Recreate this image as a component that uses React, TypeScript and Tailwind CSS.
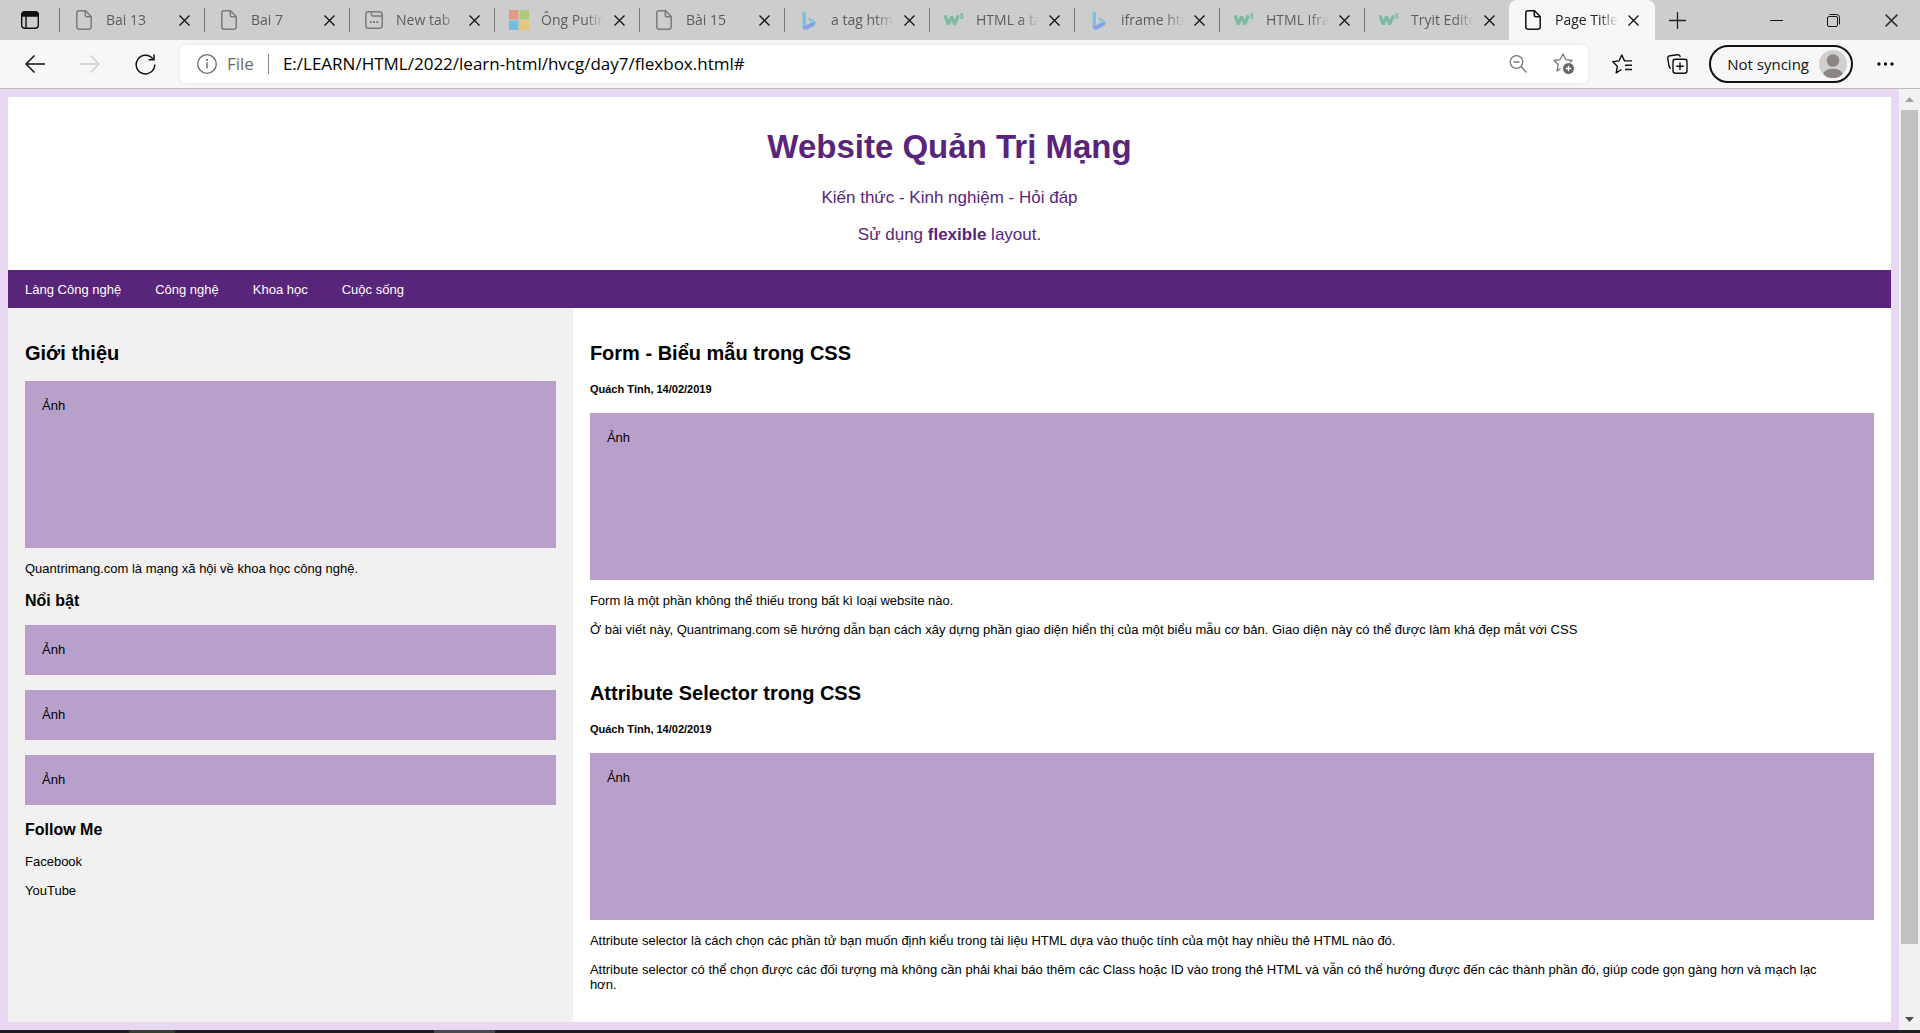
import type { ReactNode } from "react";

type IconKind = "file" | "newtab" | "ms" | "bing" | "w3";

function FileIcon({ dark = false }: { dark?: boolean }) {
  return (
    <svg width="16" height="20" viewBox="0 0 16 20" fill="none" stroke={dark ? "#111" : "#7b7b7b"} strokeWidth="1.5">
      <path d="M3 .8h6.500L15.200 6.500V17a2.200 2.200 0 0 1-2.200 2.200H3A2.200 2.200 0 0 1 .8 17V3A2.200 2.200 0 0 1 3 .8z" />
      <path d="M9.300 1v4.200a1.500 1.500 0 0 0 1.500 1.500H15" />
    </svg>
  );
}

function Favicon({ kind, active }: { kind: IconKind; active: boolean }) {
  if (kind === "file") return <FileIcon dark={active} />;
  if (kind === "newtab")
    return (
      <svg width="18" height="18" viewBox="0 0 18 18" fill="none" stroke="#7b7b7b" strokeWidth="1.500">
        <rect x=".8" y=".8" width="16.400" height="16.400" rx="3" />
        <path d="M6.500 1v2.500a1.500 1.500 0 0 0 1.500 1.500h9" />
        <path d="M5 11h1.800M8.200 11H10M11.400 11h1.800" strokeWidth="1.800" />
      </svg>
    );
  if (kind === "ms")
    return (
      <svg width="20" height="20" viewBox="0 0 20 20">
        <path fill="#e09a88" d="M0 0h9.500v9.500H0z" />
        <path fill="#b2c97c" d="M10.500 0H20v9.500h-9.500z" />
        <path fill="#76bddd" d="M0 10.500h9.500V20H0z" />
        <path fill="#e4c778" d="M10.500 10.500H20V20h-9.500z" />
      </svg>
    );
  if (kind === "bing")
    return (
      <svg width="14" height="19" viewBox="0 0 14 19">
        <path fill="#83bfe3" d="M.5 0 4 1.300v13L.5 16.500z" />
        <path fill="#86a4e3" d="M.5 15.500 4 14.300l4.500-2.600 4.800-1.100c.4 2-.3 3.600-2 4.700L5.300 18.500C3 19.300.5 18 .5 15.500z" />
        <path fill="#7cc5e2" d="M5.600 6.200 11 8.500c1.600.8 2.500 2.500 2.300 4.300-.6-1-1.300-1.400-2.200-1.700L7.300 10z" />
      </svg>
    );
  return (
    <svg width="21" height="14" viewBox="0 0 21 14" fill="none" stroke="#7bbba2">
      <path d="M1 2l3.500 9.500L8 3.500l3.300 8L15 2" strokeWidth="3.400" strokeLinejoin="bevel" />
      <path d="M16.800.8h2.700l-1.400 1.800c2.300.1 1.900 2.900-.1 2.600-.6 0-1-.3-1.300-.6" strokeWidth="1.300" />
    </svg>
  );
}

function Cross({ size = 11, color = "#111" }: { size?: number; color?: string }) {
  return (
    <svg width={size} height={size} viewBox="0 0 11 11" stroke={color} strokeWidth="1.300">
      <path d="M.5.500l10 10M10.500.500l-10 10" />
    </svg>
  );
}

const tabs: { icon: IconKind; title: string }[] = [
  { icon: "file", title: "Bai 13" },
  { icon: "file", title: "Bai 7" },
  { icon: "newtab", title: "New tab" },
  { icon: "ms", title: "Ông Putin" },
  { icon: "file", title: "Bài 15" },
  { icon: "bing", title: "a tag html" },
  { icon: "w3", title: "HTML a tag" },
  { icon: "bing", title: "iframe html" },
  { icon: "w3", title: "HTML Iframe" },
  { icon: "w3", title: "Tryit Editor" },
  { icon: "file", title: "Page Title" },
];

function Tab({ icon, title, active }: { icon: IconKind; title: string; active: boolean }) {
  return (
    <div
      className={
        active
          ? "flex h-10 w-[146px] min-w-0 items-center rounded-t-lg bg-[#f7f7f7] pl-3.5 pr-4"
          : "flex h-10 w-[145px] min-w-0 items-center pr-3.5"
      }
    >
      {!active && <span className="mr-3.5 h-6 w-px shrink-0 bg-[#777]" />}
      <span className="flex w-5 shrink-0 items-center justify-center">
        <Favicon kind={icon} active={active} />
      </span>
      <span
        className={
          active
            ? "ml-3 w-[63px] overflow-hidden whitespace-nowrap text-[#222] [mask-image:linear-gradient(to_right,black_70%,transparent)]"
            : "ml-3 w-[63px] overflow-hidden whitespace-nowrap text-[#5c5c5c] [mask-image:linear-gradient(to_right,black_70%,transparent)]"
        }
      >
        {title}
      </span>
      <button aria-label={"Close " + title} className="ml-auto">
        <Cross />
      </button>
    </div>
  );
}

function ToolButton({ label, children }: { label: string; children: ReactNode }) {
  return (
    <button aria-label={label} className="flex size-9 shrink-0 items-center justify-center">
      {children}
    </button>
  );
}

function TabStrip() {
  return (
    <div className="flex h-10 items-center bg-[#cdcdcd] text-sm">
      <button aria-label="Tab actions" className="flex w-[59px] shrink-0 items-center justify-center">
        <svg width="18" height="18" viewBox="0 0 18 18" fill="none" stroke="#111" strokeWidth="1.400">
          <rect x=".7" y=".7" width="16.600" height="16.600" rx="3" />
          <path d="M1 3.500A2.500 2.500 0 0 1 3.500 1h11A2.500 2.500 0 0 1 17 3.500V5H1z" fill="#111" />
          <path d="M5 5v12" />
        </svg>
      </button>
      {tabs.map((t, i) => (
        <Tab key={i} icon={t.icon} title={t.title} active={i === tabs.length - 1} />
      ))}
      <button aria-label="New tab" className="ml-3.5">
        <svg width="17" height="17" viewBox="0 0 17 17" stroke="#222" strokeWidth="1.300">
          <path d="M8.500 0v17M0 8.500h17" />
        </svg>
      </button>
      <div className="ml-auto flex">
        <button aria-label="Minimize" className="flex h-10 w-[57px] items-center justify-center">
          <svg width="13" height="13" viewBox="0 0 13 13" stroke="#111"><path d="M0 6.500h13" /></svg>
        </button>
        <button aria-label="Restore" className="flex h-10 w-[57px] items-center justify-center">
          <svg width="13" height="13" viewBox="0 0 13 13" fill="none" stroke="#111">
            <rect x=".5" y="2.500" width="10" height="10" rx="1.500" />
            <path d="M2.500.5h7a3 3 0 0 1 3 3v7" />
          </svg>
        </button>
        <button aria-label="Close window" className="flex h-10 w-[58px] items-center justify-center">
          <Cross size={13} color="#333" />
        </button>
      </div>
    </div>
  );
}

function Toolbar() {
  return (
    <div className="flex h-[49px] items-center border-b border-[#bdbdbd] bg-[#f7f7f7] pl-[17px] pr-[17px]">
      <div className="mr-[17px] flex gap-[19px]">
        <ToolButton label="Back">
          <svg width="20" height="18" viewBox="0 0 20 18" fill="none" stroke="#111" strokeWidth="1.500"><path d="M20 9H1M9.500.500L1 9l8.500 8.500" /></svg>
        </ToolButton>
        <ToolButton label="Forward">
          <svg width="20" height="18" viewBox="0 0 20 18" fill="none" stroke="#cfcfcf" strokeWidth="1.500"><path d="M0 9h19M10.500.500L19 9l-8.500 8.500" /></svg>
        </ToolButton>
        <ToolButton label="Refresh">
          <svg width="21" height="21" viewBox="0 0 21 21" fill="none" stroke="#111" strokeWidth="1.500">
            <path d="M19.800 10.500A9.300 9.300 0 1 1 17.800 4.800" /><path d="M19 .5v5.300h-5.300" />
          </svg>
        </ToolButton>
      </div>
      <div className="flex h-[38px] min-w-0 flex-1 items-center rounded-md bg-white pl-[17px] pr-[6px] shadow-[0_0_4px_rgba(0,0,0,0.08)]">
        <svg className="shrink-0" width="20" height="20" viewBox="0 0 20 20" fill="none" stroke="#6b6b6b" strokeWidth="1.300">
          <circle cx="10" cy="10" r="9.300" /><path d="M10 8.500v6" strokeWidth="1.500" /><path d="M10 5v1.800" strokeWidth="1.800" />
        </svg>
        <span className="ml-2.5 text-[17px] text-[#6b6b6b]">File</span>
        <span className="mx-3.5 h-5 w-px shrink-0 bg-[#888]" />
        <input
          aria-label="Address"
          className="min-w-0 flex-1 bg-transparent text-[17px] text-black outline-none"
          defaultValue="E:/LEARN/HTML/2022/learn-html/hvcg/day7/flexbox.html#"
        />
        <div className="flex gap-[10px]">
          <ToolButton label="Zoom out">
            <svg width="18" height="18" viewBox="0 0 18 18" fill="none" stroke="#777" strokeWidth="1.300">
              <circle cx="7.500" cy="7" r="6.300" /><path d="M4.500 7h6M12 11.500l5.500 6" />
            </svg>
          </ToolButton>
          <ToolButton label="Add to favorites">
            <svg width="22" height="22" viewBox="0 0 22 22" fill="none">
              <path d="M7.500 15.500L4 18l1.200-6.500L1 7.500l6-.8L10 1l3 5.700 6 .8-2 2" stroke="#777" strokeWidth="1.300" strokeLinejoin="round" />
              <circle cx="15.500" cy="15.500" r="5.500" fill="#666" /><path d="M15.500 12.700v5.600M12.700 15.500h5.600" stroke="#fff" strokeWidth="1.300" />
            </svg>
          </ToolButton>
        </div>
      </div>
      <div className="ml-4 flex gap-[19px]">
        <ToolButton label="Favorites">
          <svg width="21" height="20" viewBox="0 0 21 20" fill="none" stroke="#111" strokeWidth="1.400" strokeLinejoin="round">
            <path d="M9.500 15.500L4.200 18.800 5.300 12.300.8 7.800l6.200-.9L9.800 1l2.700 5.900h7.500M13 11.200h7M13 15.500h7" />
          </svg>
        </ToolButton>
        <ToolButton label="Collections">
          <svg width="21" height="20" viewBox="0 0 21 20" fill="none" stroke="#111" strokeWidth="1.400">
            <rect x="6" y="5.200" width="14" height="14" rx="2.500" />
            <path d="M13 8.500v7.400M9.300 12.200h7.400M3.800 14.500C2.500 14 2.300 13 2 12L.8 4.500C.6 3 1.300 2 2.800 1.800L10.500.800c1.500-.2 2.500.6 2.900 2.200" />
          </svg>
        </ToolButton>
      </div>
      <button className="ml-[14px] flex h-[38px] shrink-0 items-center rounded-full border-2 border-[#111] pl-4 pr-1 text-[15px] text-[#111]">
        Not syncing
        <svg className="ml-2.5" width="28" height="28" viewBox="0 0 28 28">
          <circle cx="14" cy="14" r="14" fill="#d2d0ce" />
          <circle cx="14" cy="10.500" r="6.300" fill="#8a8785" />
          <path d="M4 24a10.500 7.500 0 0 1 20 0 14 14 0 0 1-20 0z" fill="#8a8785" />
        </svg>
      </button>
      <div className="ml-[14px]">
        <ToolButton label="Settings and more">
          <svg width="17" height="4" viewBox="0 0 17 4" fill="#111"><circle cx="2" cy="2" r="1.700" /><circle cx="8.500" cy="2" r="1.700" /><circle cx="15" cy="2" r="1.700" /></svg>
        </ToolButton>
      </div>
    </div>
  );
}

function Picture({ tall = false }: { tall?: boolean }) {
  return <div className={tall ? "h-[167px] bg-[#b9a0cb] p-[17px]" : "h-[50px] bg-[#b9a0cb] p-[17px]"}>Ảnh</div>;
}

function Article({ title, children }: { title: string; children: ReactNode }) {
  return (
    <article>
      <h2 className="text-xl leading-[23px] font-bold">{title}</h2>
      <h5 className="mt-[18px] mb-[17px] text-[11px] leading-[13px] font-bold">Quách Tỉnh, 14/02/2019</h5>
      <Picture tall />
      <div className="mt-[13px] flex flex-col gap-[14px] pr-8">{children}</div>
    </article>
  );
}

function Site() {
  return (
    <div className="flex min-w-0 flex-1 flex-col bg-[#e8d8f3] p-2 font-['Liberation_Sans',Arial,sans-serif] text-[13px] leading-[15px] text-black">
      <header className="bg-white pt-[31px] pb-[26px] text-center text-[17px] leading-[19px] text-[#59257a]">
        <h1 className="text-[33px] leading-[38px] font-bold">Website Quản Trị Mạng</h1>
        <p className="mt-[22px]">Kiến thức - Kinh nghiệm - Hỏi đáp</p>
        <p className="mt-[18px]">Sử dụng <b>flexible</b> layout.</p>
      </header>
      <nav className="flex bg-[#59257a] text-white">
        {["Làng Công nghệ", "Công nghệ", "Khoa học", "Cuộc sống"].map((label) => (
          <a key={label} href="#" className="px-[17px] pt-3 pb-[11px]">{label}</a>
        ))}
      </nav>
      <div className="flex flex-1 bg-white">
        <aside className="w-[30%] shrink-0 bg-[#f1f1f1] px-[17px] pt-[34px]">
          <h2 className="mb-4 text-xl leading-[23px] font-bold">Giới thiệu</h2>
          <Picture tall />
          <p className="mt-[13px]">Quantrimang.com là mạng xã hội về khoa học công nghệ.</p>
          <h3 className="mt-4 mb-[15px] text-base leading-[18px] font-bold">Nổi bật</h3>
          <div className="flex flex-col gap-[15px]">
            <Picture />
            <Picture />
            <Picture />
          </div>
          <h3 className="mt-4 mb-[15px] text-base leading-[18px] font-bold">Follow Me</h3>
          <p><a href="#">Facebook</a></p>
          <p className="mt-[14px]"><a href="#">YouTube</a></p>
        </aside>
        <main className="flex min-w-0 flex-1 flex-col gap-[45px] px-[17px] pt-[34px] pb-[29px]">
          <Article title="Form - Biểu mẫu trong CSS">
            <p>Form là một phần không thể thiếu trong bất kì loại website nào.</p>
            <p>Ở bài viết này, Quantrimang.com sẽ hướng dẫn bạn cách xây dựng phần giao diện hiển thị của một biểu mẫu cơ bản. Giao diện này có thể được làm khá đẹp mắt với CSS</p>
          </Article>
          <Article title="Attribute Selector trong CSS">
            <p>Attribute selector là cách chọn các phần tử bạn muốn định kiểu trong tài liệu HTML dựa vào thuộc tính của một hay nhiều thẻ HTML nào đó.</p>
            <p>Attribute selector có thể chọn được các đối tượng mà không cần phải khai báo thêm các Class hoặc ID vào trong thẻ HTML và vẫn có thể hướng được đến các thành phần đó, giúp code gọn gàng hơn và mạch lạc hơn.</p>
          </Article>
        </main>
      </div>
    </div>
  );
}

function Scrollbar() {
  return (
    <div className="flex w-[21px] shrink-0 flex-col items-center bg-[#f1f1f1] py-2">
      <svg width="9" height="5" viewBox="0 0 9 5" fill="#a3a3a3"><path d="M0 5L4.500 0 9 5z" /></svg>
      <div className="mt-2 h-[834px] w-[17px] bg-[#c1c1c1]" />
      <svg className="mt-auto" width="9" height="5" viewBox="0 0 9 5" fill="#505050"><path d="M0 0l4.500 5L9 0z" /></svg>
    </div>
  );
}

export default function App() {
  return (
    <div className="flex min-h-screen flex-col font-['Open_Sans','Noto_Sans',sans-serif]">
      <TabStrip />
      <Toolbar />
      <div className="flex flex-1">
        <Site />
        <Scrollbar />
      </div>
      <div className="flex h-[3px] bg-[#1f1f1f]">
        <span className="ml-[129px] w-[46px] bg-[#34402f]" />
        <span className="ml-[259px] w-[61px] bg-[#4a4a4a]" />
      </div>
    </div>
  );
}
